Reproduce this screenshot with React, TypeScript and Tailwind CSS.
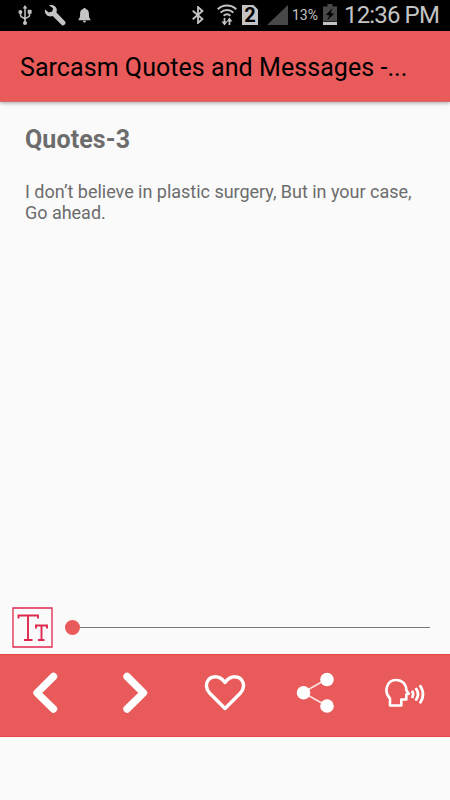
import type { ReactNode } from 'react'

// icons on the left and right of the status bar
function StatusBar() {
  return (
    <div className="flex h-[31px] shrink-0 items-start bg-black text-[#c4c4c4]">
      <svg className="ml-[18px] mt-[5px] h-5 w-[14px] shrink-0" viewBox="0 0 14 20" fill="currentColor">
        <path d="M7 0l2.300 3.600H4.700z" />
        <path d="M7 3v15M2.500 7v3.200c0 3 4.500 1.500 4.500 4.800M11.500 6.500v4c0 2.500-4.500 1.200-4.500 4.500" fill="none" stroke="currentColor" strokeWidth="1.500" />
        <circle cx="2.400" cy="6.900" r="2" />
        <path d="M9.700 4.800h3.900v3.900H9.700z" />
        <circle cx="7" cy="18" r="2" />
      </svg>
      <svg className="ml-[12px] mt-[4px] h-[22px] w-[22px] shrink-0" viewBox="0 0 22 22" fill="currentColor">
        <path d="M5 1.300C8.500 0 12.400 2 12.800 5.800c.1 1-.1 1.800-.4 2.600l8.300 8.600a2.400 2.400 0 0 1-3.500 3.500L8.700 12C5.200 13.500 1.300 11.200.9 7.500c-.1-.8 0-1.500.2-2.100l3.600 3.200 3.500-1 .9-3.300z" />
      </svg>
      <svg className="ml-[12px] mt-[8px] h-[15px] w-[13px] shrink-0" viewBox="0 0 12 15" fill="currentColor">
        <path d="M5 0h2v1c2.500.5 3.400 2.200 3.400 4.500 0 3 .2 4.500 1.600 6v.8H0v-.8c1.400-1.500 1.600-3 1.600-6C1.600 3.200 2.500 1.500 5 1zM4.500 12.800h3c0 1-.6 1.700-1.500 1.700s-1.500-.7-1.500-1.700z" />
      </svg>

      <svg className="ml-[101px] mt-[6px] h-[18px] w-[12px] shrink-0" viewBox="0 0 12 18" fill="none" stroke="currentColor" strokeWidth="1.800">
        <path d="M.7 4.800l9.800 8.200L6 17V1l4.500 4L.7 13.200" />
      </svg>
      <svg className="ml-[13px] mt-[4px] h-[22px] w-5 shrink-0" viewBox="0 0 20 22" fill="none" stroke="currentColor" strokeWidth="1.900">
        <path d="M.7 5.300C6 .3 14 .3 19.300 5.300M3.600 8.600c3.700-3.400 9.100-3.400 12.800 0M6.600 11.800c2-1.800 4.800-1.800 6.800 0" />
        <path d="M7.500 14v6M12.500 21v-6" strokeWidth="1.700" />
        <path d="M4.500 17.500h6L7.500 21.500zM9.500 17.500h6l-3-4z" fill="currentColor" stroke="none" />
      </svg>
      <div className="ml-[5px] mt-[5px] flex h-5 w-[16px] shrink-0 items-center justify-center bg-[#c4c4c4] text-[20px] font-bold leading-5 text-black [clip-path:polygon(0_0,72%_0,100%_22%,100%_100%,0_100%)]">
        2
      </div>
      <svg className="ml-[9px] mt-[5px] h-5 w-[21px] shrink-0" viewBox="0 0 21 20">
        <path d="M21 0v20H0z" fill="#484848" />
      </svg>
      <span className="ml-[4px] mt-[5px] w-[28px] shrink-0 whitespace-nowrap text-[14px] leading-5">13%</span>
      <svg className="ml-[3px] mt-[4px] h-[21px] w-[14px] shrink-0" viewBox="0 0 14 21">
        <path d="M4.500 0h5v2.500H14V17.500H0V2.500h4.500z" fill="#484848" />
        <path d="M9.800 4L3 10.800l3.500.6L4 16.500l7.200-6.800-3.700-.6z" fill="#000" />
        <path d="M0 18h14v3H0z" fill="#c4c4c4" />
      </svg>
      <span className="ml-[7px] mt-[1px] shrink-0 whitespace-nowrap text-[24px] leading-7 tracking-[-0.85px]">12:36 PM</span>
    </div>
  )
}

function ToolButton({ label, children }: { label: string; children: ReactNode }) {
  return (
    <button aria-label={label} className="flex flex-1 items-start justify-center pt-[17px] text-white">
      <svg width="42" height="42" viewBox="0 0 42 42" fill="none" stroke="currentColor" strokeLinecap="round" strokeLinejoin="round">
        {children}
      </svg>
    </button>
  )
}

export default function App() {
  return (
    <div className="flex h-[800px] w-[450px] flex-col overflow-hidden bg-[#fafafa] font-['Roboto',sans-serif]">
      <StatusBar />

      <header className="z-10 flex h-[71px] shrink-0 items-center border-b border-[#d56a6a] bg-[#e95a5a] px-5 shadow-[0_1px_4px_rgba(0,0,0,0.35)]">
        <h1 className="whitespace-nowrap pt-[3px] text-[25px] leading-8 tracking-[0.06px] text-black">Sarcasm Quotes and Messages -...</h1>
      </header>

      <main className="flex-1 px-[25px] pt-[22px] text-[#6c6c6c]">
        <h2 className="text-[25px] font-bold leading-8 tracking-[0.1px]">Quotes-3</h2>
        <p className="mt-[25px] whitespace-nowrap text-[18px] leading-[21px] tracking-[-0.02px]">
          I don’t believe in plastic surgery, But in your case,
          <br />
          Go ahead.
        </p>
      </main>

      {/* text size slider */}
      <div className="flex h-[53px] shrink-0 items-start pl-[12px] pr-5 pt-[6px]">
        <svg className="shrink-0" width="41" height="41" viewBox="0 0 41 41" fill="none" stroke="#e0284f">
          <path d="M1 1h39v39H1z" strokeWidth="1.300" />
          <path d="M6.500 11.500V8.500h19.500V11.500M16 8.500v24.500M12 33h8.500" strokeWidth="1.900" />
          <path d="M24 21.500v-3h11V21.500M29.500 18.500v14.500M26 33h6.500" strokeWidth="1.900" />
        </svg>
        <div className="ml-[12px] mt-[13px] flex h-[15px] flex-1 items-center">
          <span className="h-[15px] w-[15px] rounded-full bg-[#e95a5a]" />
          <span className="h-px flex-1 bg-[#777]" />
        </div>
      </div>

      <nav className="flex h-[83px] shrink-0 border-y border-[#e84545] bg-[#e95a5a]">
        <ToolButton label="Previous">
          <path d="M29.500 4.500L13 20.800L29.500 37" strokeWidth="7.400" />
        </ToolButton>
        <ToolButton label="Next">
          <path d="M13 4.500L29.500 20.800L13 37" strokeWidth="7.400" />
        </ToolButton>
        <ToolButton label="Favourite">
          <path d="M21 36.500L5.500 21C-1 13 4 4.800 11.500 4.800c4 0 7 2.500 9.500 5.700C23.500 7.300 26.500 4.800 30.500 4.800c7.500 0 12.500 8.200 6 16.200z" strokeWidth="3.400" />
        </ToolButton>
        <ToolButton label="Share">
          <path d="M9 20.500L33 7M9 20.500L33 34" strokeWidth="1.800" stroke="#fbdede" />
          <g fill="currentColor" stroke="none">
            <circle cx="9.500" cy="20.800" r="6.800" />
            <circle cx="33" cy="7.500" r="6.800" />
            <circle cx="33" cy="34" r="6.800" />
          </g>
        </ToolButton>
        <ToolButton label="Speak">
          <path d="M6 33.500V26.500C-.5 20 2.500 8 12 8c6.500 0 10.300 4.500 10.300 10.200l2.500 3.500-2.500.8v5h-5V33.500z" strokeWidth="2.600" />
          <path d="M28.500 19.800q1.200 2.500 0 5M32.300 17.100q3.500 5.200 0 10.500M36.500 14.300q5 8 0 16" strokeWidth="2.800" />
        </ToolButton>
      </nav>
      <div className="h-[63px] shrink-0" />
    </div>
  )
}
